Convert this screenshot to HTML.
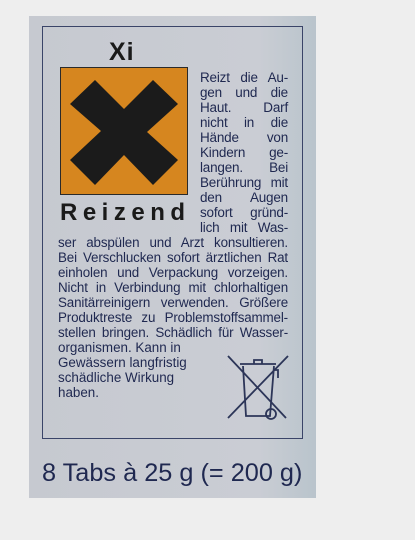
<!DOCTYPE html>
<html><head><meta charset="utf-8"><style>
body{margin:0;width:415px;height:540px;background:#eeeeee;position:relative;overflow:hidden;font-family:"Liberation Sans",sans-serif}
.photo{position:absolute;left:29px;top:16px;width:287px;height:482px;background:linear-gradient(90deg,#c6c9d0 0%,#cacdd4 80%,#b9c4cc 100%)}
.box{position:absolute;left:42px;top:26px;width:259px;height:411px;border:1.5px solid #3a4468}
.ln{position:absolute;font-size:13.4px;line-height:15px;color:#1f2850;text-align:justify;text-align-last:justify;white-space:nowrap;height:15px}
.r{left:200px;width:88px;font-size:13.5px;letter-spacing:-0.2px}
.f{left:58px;width:230px;letter-spacing:-0.15px}
</style></head><body>
<div class="photo"></div>
<div class="box"></div>
<div style="position:absolute;left:109px;top:38px;font-size:25px;font-weight:bold;color:#1a1a1a;letter-spacing:1px">Xi</div>
<div style="position:absolute;left:60px;top:67px;width:126px;height:126px;background:#d6861f;border:1.5px solid #2a2a2a"></div>
<svg style="position:absolute;left:60px;top:67px" width="129" height="129" viewBox="0 0 129 129"><path d="M10 37 L35 13 L64 42 L93 13 L118 37 L87 65 L118 93 L93 118 L64 88 L35 118 L10 93 L41 64Z" fill="#1b1b1b"/></svg>
<div style="position:absolute;left:60px;top:199px;font-size:24px;font-weight:bold;color:#1a1a1a;letter-spacing:5.5px">Reizend</div>
<div class="ln r" style="top:70px">Reizt die Au-</div>
<div class="ln r" style="top:85px">gen und die</div>
<div class="ln r" style="top:100px">Haut. Darf</div>
<div class="ln r" style="top:115px">nicht in die</div>
<div class="ln r" style="top:130px">Hände von</div>
<div class="ln r" style="top:145px">Kindern ge-</div>
<div class="ln r" style="top:160px">langen. Bei</div>
<div class="ln r" style="top:175px">Berührung mit</div>
<div class="ln r" style="top:190px">den Augen</div>
<div class="ln r" style="top:205px">sofort gründ-</div>
<div class="ln r" style="top:220px">lich mit Was-</div>
<div class="ln f" style="top:235px">ser abspülen und Arzt konsultieren.</div>
<div class="ln f" style="top:250px">Bei Verschlucken sofort ärztlichen Rat</div>
<div class="ln f" style="top:265px">einholen und Verpackung vorzeigen.</div>
<div class="ln f" style="top:280px">Nicht in Verbindung mit chlorhaltigen</div>
<div class="ln f" style="top:295px">Sanitärreinigern verwenden. Größere</div>
<div class="ln f" style="top:310px">Produktreste zu Problemstoffsammel-</div>
<div class="ln f" style="top:325px">stellen bringen. Schädlich für Wasser-</div>
<div class="ln" style="top:340px;left:58px">organismen. Kann in</div>
<div class="ln" style="top:355px;left:58px">Gewässern langfristig</div>
<div class="ln" style="top:370px;left:58px">schädliche Wirkung</div>
<div class="ln" style="top:385px;left:58px">haben.</div>
<svg style="position:absolute;left:226px;top:352px" width="66" height="70" viewBox="0 0 66 70" fill="none" stroke="#2c3558" stroke-width="1.8"><path d="M2 4 L60 66 M62 4 L2 66"/><path d="M14 12 H50 M28 12 V8 H36 V12 M17 14 L20 64 H44 L48 14"/><circle cx="45" cy="62" r="5"/><path d="M48 18 H52 V26"/></svg>
<div style="position:absolute;left:42px;top:459px;font-size:25.3px;color:#1f2850;white-space:nowrap">8 Tabs à 25 g (= 200 g)</div>
</body></html>
